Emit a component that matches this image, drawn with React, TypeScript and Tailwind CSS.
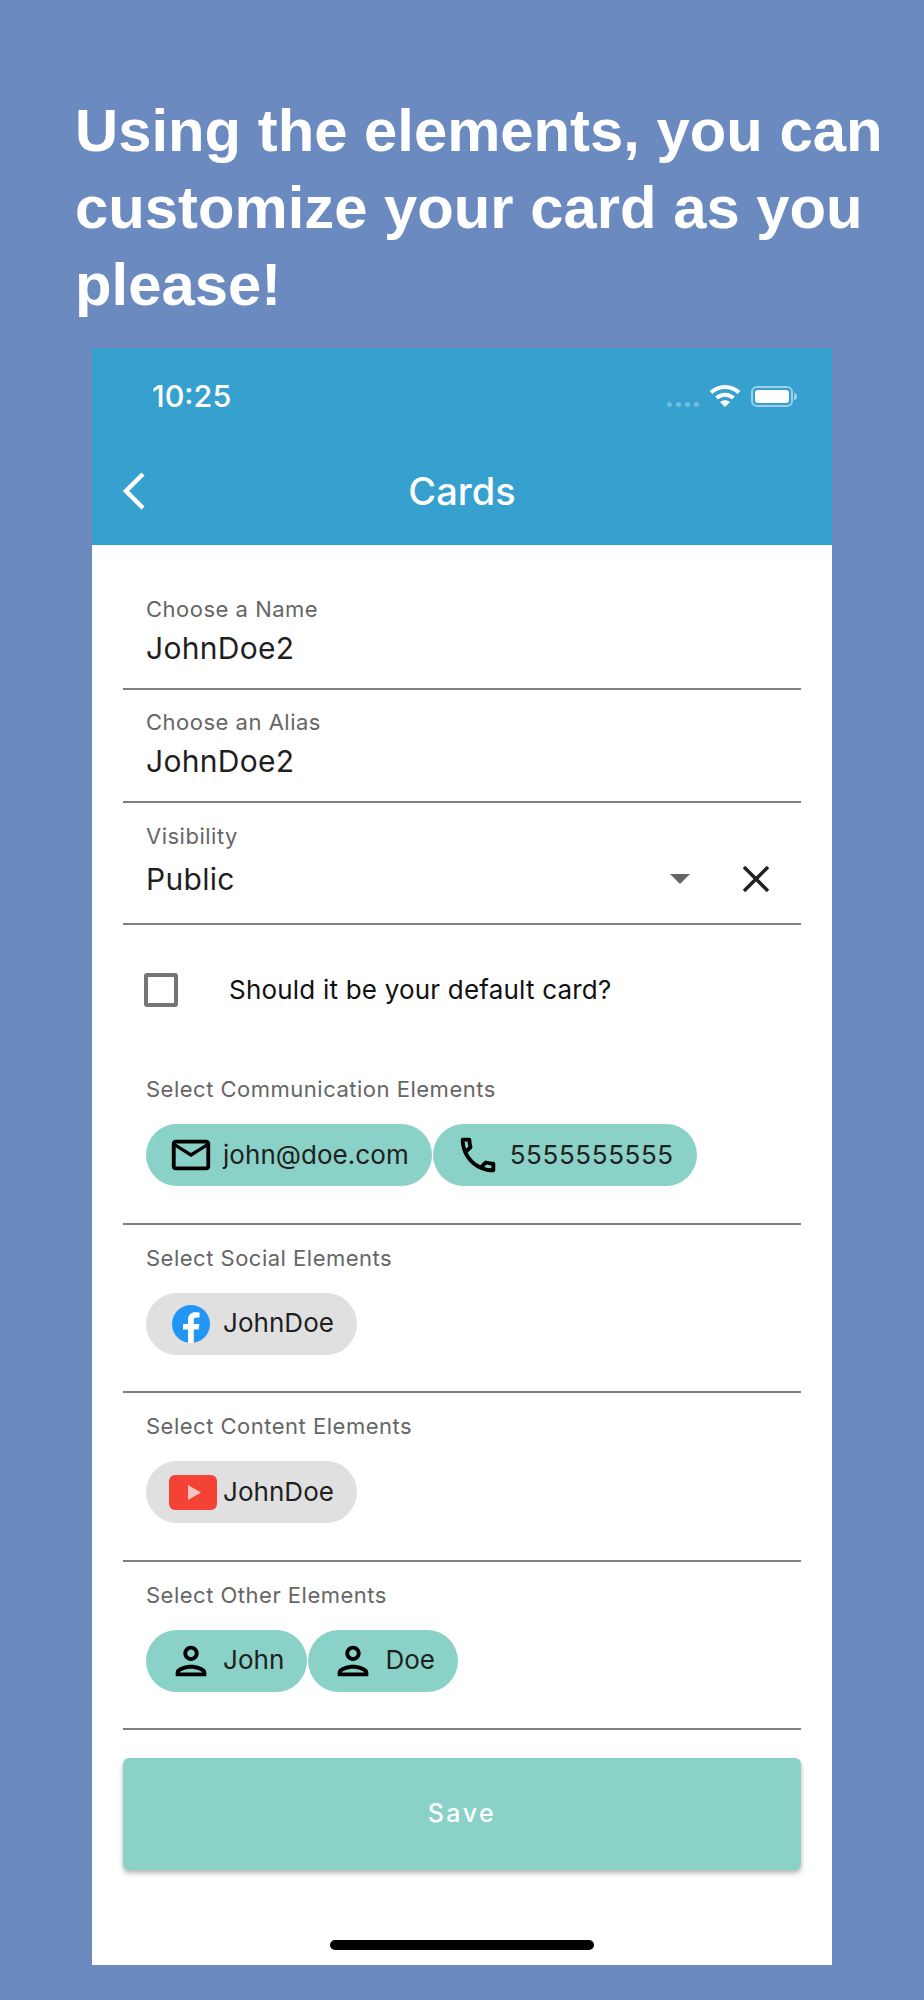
import { ReactNode } from 'react';
import { MdOutlineEmail, MdOutlinePerson, MdOutlinePhone } from 'react-icons/md';

function Field({ label, value, height }: { label: string; value: string; height: string }) {
  return (
    <div className={`${height} border-b-2 border-[#808080] px-[23px] flex flex-col justify-end pb-[18px]`}>
      <div className="text-[22px] leading-[28px] tracking-[0.5px] text-[#666666] mb-[3px]">{label}</div>
      <div className="text-[30px] leading-[44px] tracking-[0.3px] text-[#1f1f1f]">{value}</div>
    </div>
  );
}

function Chip({ icon, text, active, wide }: { icon: ReactNode; text: string; active?: boolean; wide?: boolean }) {
  return (
    <div className={`h-[62px] rounded-full flex items-center pl-[22px] pr-[23px] gap-[9px] ${active ? 'bg-[#8ad1c7]' : 'bg-[#e0e0e0]'}`}>
      <span className="w-[46px] h-[46px] flex items-center justify-center shrink-0">{icon}</span>
      <span className={`text-[26px] -mt-[2px] text-[#1f1f1f] ${wide ? 'tracking-[0.6px]' : 'tracking-[0.05px]'}`}>{text}</span>
    </div>
  );
}

function ChipSection({ label, children }: { label: string; children: ReactNode }) {
  return (
    <div className="h-[168.5px] border-b-2 border-[#808080] px-[23px] pt-[19px]">
      <div className="text-[22px] leading-[28px] tracking-[0.5px] text-[#666666]">{label}</div>
      <div className="flex gap-[1px] mt-[21px]">{children}</div>
    </div>
  );
}

function FacebookIcon() {
  return (
    <svg width="38" height="38" viewBox="0 0 38 38">
      <circle cx="19" cy="19" r="19" fill="#2196f3" />
      <path d="M16 38V24.500h-5V19h5v-4.200c0-5 3-7.600 7.400-7.600 2 0 3.600.2 4.100.3v4.900h-2.900c-2.300 0-2.800 1.100-2.800 2.700V19h5.600l-.8 5.500h-4.800V38z" fill="#fff" />
    </svg>
  );
}

function YoutubeIcon() {
  return (
    <svg width="48" height="35" viewBox="0 0 48 35" className="shrink-0 ml-[3px]">
      <rect width="48" height="35" rx="6" fill="#f44336" />
      <path d="M19 10l13 7.500L19 25z" fill="#f5c4c0" />
    </svg>
  );
}

export default function App() {
  return (
    <div className="w-[924px] h-[2000px] bg-[#6a8ac0] overflow-hidden" style={{ fontFamily: 'Inter, sans-serif' }}>
      <h1 className="pt-[92px] pl-[75px] text-[59.800px] leading-[77px] font-bold text-white whitespace-nowrap" style={{ fontFamily: '"Liberation Sans", sans-serif' }}>
        Using the elements, you can
        <br />
        customize your card as you
        <br />
        please!
      </h1>

      <div className="w-[740px] h-[1617px] ml-[92px] mt-[25px] bg-white flex flex-col">
        {/* Header */}
        <div className="h-[197px] bg-[#36a0cf] text-white shrink-0 relative">
          <div className="h-[94px] pt-[2px] pl-[60px] pr-[35px] flex items-center justify-between">
            <span className="text-[30.500px] font-medium">10:25</span>
            <div className="flex items-center">
              <div className="flex gap-[4px] mt-[16px] mr-[10px]">
                <span className="w-[5px] h-[5px] rounded-full bg-white/30" />
                <span className="w-[5px] h-[5px] rounded-full bg-white/30" />
                <span className="w-[5px] h-[5px] rounded-full bg-white/30" />
                <span className="w-[5px] h-[5px] rounded-full bg-white/30" />
              </div>
              <svg width="32" height="24" viewBox="0 0 32 24" fill="none" stroke="#fff" strokeWidth="4">
                <path d="M2 8.500C10 1 22 1 30 8.500" />
                <path d="M7.500 14c5-4.500 12-4.500 17 0" />
                <path d="M16 23l-5-5c3-2.500 7-2.500 10 0z" fill="#fff" stroke="none" />
              </svg>
              <div className="ml-[10px] w-[42px] h-[21px] rounded-[6px] border-2 border-white/50 p-[2px]">
                <div className="w-full h-full rounded-[3px] bg-white" />
              </div>
              <div className="w-[3px] h-[7px] ml-[1px] rounded-r-full bg-white/50" />
            </div>
          </div>
          <div className="h-[103px] flex items-center justify-center relative pb-[6px]">
            <svg className="absolute left-[30px] top-[30px]" width="24" height="38" viewBox="0 0 24 38" fill="none" stroke="#fff" strokeWidth="4.500">
              <path d="M21 2L4 19l17 17" />
            </svg>
            <span className="text-[38px] font-medium leading-none">Cards</span>
          </div>
        </div>

        {/* Form */}
        <div className="flex-1 px-[31px] flex flex-col">
          <div>
            <Field label="Choose a Name" value="JohnDoe2" height="h-[145px]" />
            <Field label="Choose an Alias" value="JohnDoe2" height="h-[113px]" />
            <div className="h-[122px] border-b-2 border-[#808080] pl-[23px] pr-[31px] pt-[19px]">
              <div className="text-[22px] leading-[28px] tracking-[0.5px] text-[#666666]">Visibility</div>
              <div className="flex items-center mt-[7px]">
                <span className="flex-1 text-[30px] leading-[44px] tracking-[0.3px] text-[#1f1f1f]">Public</span>
                <span className="w-0 h-0 border-l-[10px] border-r-[10px] border-t-[10px] border-l-transparent border-r-transparent border-t-[#666666] mr-[52px]" />
                <svg width="28" height="28" viewBox="0 0 28 28" stroke="#212121" strokeWidth="3.500" fill="none" className="-mt-[1px]">
                  <path d="M2 2l24 24M26 2L2 26" />
                </svg>
              </div>
            </div>
          </div>

          <div className="h-[131px] flex items-center pl-[21px] pb-[2px]">
            <span className="w-[34px] h-[34px] rounded-[3px] border-[4px] border-[#757575] shrink-0" />
            <span className="ml-[51px] text-[26px] tracking-[0.2px] text-[#111111]">Should it be your default card?</span>
          </div>

          <div>
            <ChipSection label="Select Communication Elements">
              <Chip active icon={<MdOutlineEmail size={46} color="#000" />} text="john@doe.com" />
              <Chip active wide icon={<MdOutlinePhone size={46} color="#000" />} text="5555555555" />
            </ChipSection>
            <ChipSection label="Select Social Elements">
              <Chip icon={<FacebookIcon />} text="JohnDoe" />
            </ChipSection>
            <ChipSection label="Select Content Elements">
              <Chip icon={<YoutubeIcon />} text="JohnDoe" />
            </ChipSection>
            <ChipSection label="Select Other Elements">
              <Chip active icon={<MdOutlinePerson size={46} color="#000" />} text="John" />
              <Chip active icon={<MdOutlinePerson size={46} color="#000" />} text="Doe" />
            </ChipSection>
          </div>

          <button className="mt-[28px] h-[112px] w-full rounded-[6px] bg-[#8ad1c7] text-white text-[25px] font-medium tracking-[2.500px] shadow-[0_3px_5px_rgba(0,0,0,0.3)]">
            Save
          </button>

          <div className="mt-[70px] mx-auto w-[264px] h-[10px] rounded-full bg-black" />
        </div>
      </div>
    </div>
  );
}
